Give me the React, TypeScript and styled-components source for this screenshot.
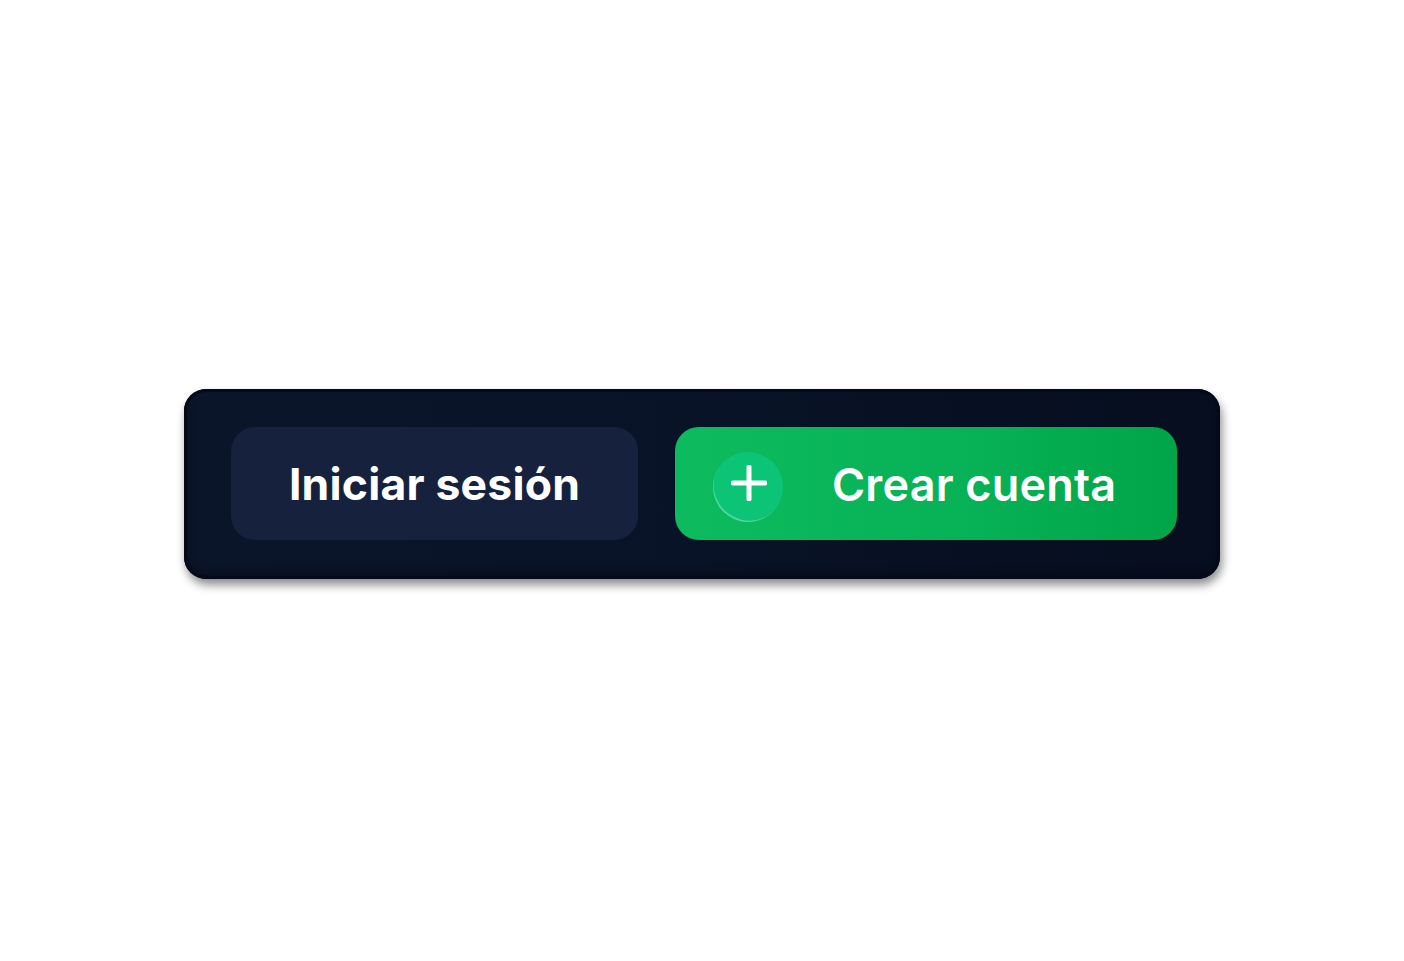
import styled, { createGlobalStyle } from "styled-components";

const GlobalStyle = createGlobalStyle`
  html, body {
    margin: 0;
    padding: 0;
    background: #ffffff;
    font-family: "Inter", "Liberation Sans", sans-serif;
  }
`;

const Page = styled.div`
  height: 961px;
  display: flex;
  align-items: center;
  justify-content: center;
  padding-top: 7px;
  box-sizing: border-box;
`;

const Bar = styled.div`
  width: 1036px;
  height: 190px;
  box-sizing: border-box;
  padding: 38px 43px 39px 47px;
  border-radius: 22px;
  background: linear-gradient(90deg, #0a1529 0%, #091327 50%, #060e1f 100%);
  box-shadow:
    inset 0 0 0 3px #040a17,
    inset 0 -6px 10px rgba(0, 0, 0, 0.35),
    2px 6px 10px rgba(0, 0, 0, 0.45);

  display: flex;
  gap: 37px;
`;

const Button = styled.button<{ $primary?: boolean }>`
  height: 113px;
  width: ${({ $primary }) => ($primary ? "502px" : "407px")};
  border: none;
  border-radius: 24px;
  cursor: pointer;
  font-family: "Inter", "Liberation Sans", sans-serif;
  font-size: ${({ $primary }) => ($primary ? "45px" : "44.5px")};
  font-weight: ${({ $primary }) => ($primary ? 600 : 700)};
  letter-spacing: 0.2px;
  color: #ffffff;
  background: ${({ $primary }) =>
    $primary ? "linear-gradient(90deg, #0dbb5e 0%, #07b155 60%, #00a548 100%)" : "#16223d"};

  display: flex;
  align-items: center;
  justify-content: ${({ $primary }) => ($primary ? "flex-start" : "center")};
  padding: ${({ $primary }) => ($primary ? "0 0 0 38px" : "0")};
  gap: 49px;
`;

const PlusBadge = styled.span`
  position: relative;
  width: 70px;
  height: 70px;
  margin-top: 6px;
  border-radius: 50%;
  background: radial-gradient(circle at 45% 35%, #0cc476 0%, #0cc477 60%, #12c07a 100%);
  flex-shrink: 0;

  &::after {
    content: "";
    position: absolute;
    inset: 0;
    border-radius: 50%;
    border-bottom: 2px solid rgba(200, 255, 225, 0.35);
    transform: rotate(35deg);
  }

  svg {
    position: absolute;
    left: 18px;
    top: 13px;
  }
`;

const Label = styled.span`
  line-height: 1;
  margin-top: 2px;
`;

export default function App() {
  return (
    <>
      <GlobalStyle />
      <Page>
        <Bar>
          <Button>
            <Label>Iniciar sesión</Label>
          </Button>
          <Button $primary>
            <PlusBadge>
              <svg width="36" height="36" viewBox="0 0 36 36">
                <path d="M18 2v32M2 18h32" stroke="#ffffff" strokeWidth="5" strokeLinecap="round" />
              </svg>
            </PlusBadge>
            <Label>Crear cuenta</Label>
          </Button>
        </Bar>
      </Page>
    </>
  );
}
